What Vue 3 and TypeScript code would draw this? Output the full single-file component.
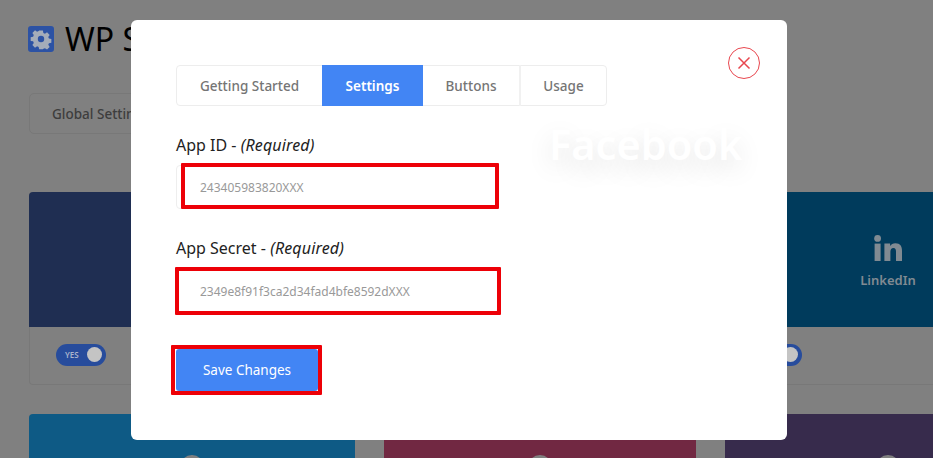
<script setup lang="ts">
interface Provider { name: string; color: string; enabled: boolean; icon: string }
const providers: Provider[] = [
  { name: 'Facebook', color: '#1f2e52', enabled: true, icon: 'none' },
  { name: 'Google', color: '#6e271f', enabled: true, icon: 'none' },
  { name: 'LinkedIn', color: '#003b5c', enabled: true, icon: 'in' },
  { name: 'Twitter', color: '#0e5a85', enabled: false, icon: 'dot' },
  { name: 'Dribbble', color: '#712842', enabled: false, icon: 'dot' },
  { name: 'GitHub', color: '#372b4c', enabled: false, icon: 'dot' },
]
const tabs = ['Getting Started', 'Settings', 'Buttons', 'Usage']
</script>

<template>
  <div class="page">
    <header class="title">
      <svg class="cog" viewBox="0 0 26 26" aria-hidden="true">
        <rect width="26" height="26" rx="3" fill="#2c52a4" />
        <path fill="#a4acb9" d="M11 4h4l.5 2.6 1.7.7 2.2-1.500 2.800 2.800-1.500 2.200.7 1.700 2.600.5v4l-2.600.5-.7 1.700 1.500 2.200-2.800 2.800-2.200-1.500-1.700.7L15 24h-4l-.5-2.600-1.700-.7-2.200 1.500-2.800-2.800 1.500-2.200-.7-1.700L2 15v-4l2.600-.5.7-1.700-1.500-2.200 2.800-2.800 2.200 1.500 1.700-.7z" transform="translate(.8 .8) scale(.94)" />
        <circle cx="13" cy="13" r="3.200" fill="#2c52a4" />
      </svg>
      <h1>WP Social Login</h1>
    </header>
    <nav class="subnav"><span>Global Settings</span></nav>
    <section class="grid">
      <article v-for="p in providers" :key="p.name" class="card">
        <div class="banner" :style="{ backgroundColor: p.color }">
          <template v-if="p.icon === 'in'">
            <svg class="in" viewBox="0 0 28 26" aria-hidden="true">
              <circle cx="3.600" cy="3.400" r="3.400" />
              <rect x=".6" y="8.600" width="6" height="17.400" />
              <path d="M10.400 8.600h5.700V11c.9-1.600 2.900-2.800 5.300-2.800 4.900 0 6.600 3 6.600 7.600V26h-6v-9.200c0-2.200-.6-3.700-2.600-3.700s-3 1.500-3 3.700V26h-6z" />
            </svg>
            <span class="name">{{ p.name }}</span>
          </template>
          <span v-else-if="p.icon === 'dot'" class="ring"></span>
        </div>
        <div v-if="p.enabled" class="foot">
          <span class="switch"><em>YES</em><i></i></span>
        </div>
      </article>
    </section>

    <div class="overlay">
      <div class="modal">
        <button class="close" type="button" aria-label="Close">
          <svg viewBox="0 0 32 32" width="32" height="32" aria-hidden="true">
            <circle cx="16" cy="16" r="15.500" fill="none" stroke="#e8474f" />
            <path d="M10.500 10.500 21.500 21.500M21.500 10.500 10.500 21.500" stroke="#e8474f" stroke-width="1.500" />
          </svg>
        </button>
        <div class="ghost">Facebook</div>
        <div class="tabs">
          <span v-for="t in tabs" :key="t" class="tab" :class="{ active: t === 'Settings' }">{{ t }}</span>
        </div>
        <div class="field first">
          <label>App ID - <em>(Required)</em></label>
          <div class="control">
            <input type="text" value="243405983820XXX" readonly />
            <span class="mark mark-id"></span>
          </div>
        </div>
        <div class="field second">
          <label>App Secret - <em>(Required)</em></label>
          <div class="control">
            <input type="text" value="2349e8f91f3ca2d34fad4bfe8592dXXX" readonly />
            <span class="mark mark-secret"></span>
          </div>
        </div>
        <div class="actions">
          <button class="save" type="button">Save Changes</button>
          <span class="mark mark-save"></span>
        </div>
      </div>
    </div>
  </div>
</template>

<style>
html, body { margin: 0; overflow: hidden; background: #808080; }
</style>

<style scoped>
.page { position: relative; width: 933px; height: 458px; overflow: hidden; padding: 21px 0 0 29px; box-sizing: border-box; font-family: "Noto Sans", "Open Sans", sans-serif; background: #808080; }
.title { display: flex; align-items: center; gap: 11px; height: 36px; }
.cog { width: 26px; height: 26px; margin-left: -1px; }
h1 { margin: 0; font-size: 32px; font-weight: 400; line-height: 36px; color: #000; white-space: nowrap; }
.subnav { width: 400px; height: 39px; margin-top: 36px; border: 1px solid #787878; border-radius: 5px; display: flex; align-items: center; padding-left: 22px; }
.subnav span { font-size: 13.500px; font-weight: 500; color: #3d3d3d; }
.grid { display: grid; grid-template-columns: 326px 312px 326px; gap: 29px; margin-top: 58px; }
.card { height: 193px; border: 1px solid #787878; border-top: 0; border-radius: 4px; box-sizing: border-box; }
.banner { height: 135px; margin: 0 -1px; border-radius: 4px 4px 0 0; display: flex; flex-direction: column; align-items: center; }
.in { width: 28px; height: 26px; margin-top: 43px; fill: #808a92; }
.name { font-size: 13px; font-weight: 600; margin-top: 10px; line-height: 18px; color: #808a92; }
.ring { width: 24px; height: 24px; border-radius: 50%; border: 3px solid #808080; box-sizing: border-box; margin-top: 41px; }
.foot { height: 58px; display: flex; align-items: center; padding-left: 26px; padding-bottom: 3px; box-sizing: border-box; }
.switch { width: 50px; height: 22px; background: #274c9c; border-radius: 11px; display: flex; align-items: center; justify-content: space-between; padding: 0 4px 0 9px; box-sizing: border-box; }
.switch em { font-style: normal; font-size: 8px; font-weight: 600; color: #a9b4cc; }
.switch i { width: 15px; height: 15px; border-radius: 50%; background: #c4c4c4; }

.overlay { position: absolute; inset: 0; padding: 20px 0 0 131px; box-sizing: border-box; }
.modal { position: relative; width: 656px; height: 420px; background: #fff; border-radius: 6px; padding: 45px; box-sizing: border-box; }
.close { position: absolute; top: 27px; right: 27px; width: 32px; height: 32px; padding: 0; border: 0; background: none; }
.ghost { position: absolute; left: 418px; top: 96px; font-size: 41.500px; font-weight: 600; line-height: 56px; color: #fff; text-shadow: 0 9px 26px rgba(0, 0, 0, .13); }
.tabs { display: flex; width: 431px; height: 41px; border: 1px solid #ededed; border-radius: 4px; box-sizing: border-box; }
.tab { display: flex; align-items: center; justify-content: center; font-size: 13.500px; font-weight: 500; color: #757575; height: 41px; margin-top: -1px; border-right: 2px solid #f1f1f1; box-sizing: border-box; }
.tab:nth-child(1) { width: 145px; border-right: 0; }
.tab:nth-child(2) { width: 101px; border-right: 0; }
.tab:nth-child(3) { width: 98px; }
.tab:nth-child(4) { flex: 1; border-right: 0; }
.tab.active { background: #4285f4; color: #fff; font-weight: 600; }
.field label { display: block; font-size: 16px; line-height: 20px; color: #222; font-weight: 400; }
.field em { font-style: italic; letter-spacing: .15px; }
.first { margin-top: 29px; }
.second { margin-top: 29px; }
.control { position: relative; margin-top: 10px; width: 322px; }
.second .control { margin-top: 11px; }
input { display: block; width: 100%; height: 44px; padding: 0 23px; border: 1px solid #eee; border-radius: 4px; box-sizing: border-box; font: 12px "Noto Sans", sans-serif; color: #999; background: #fff; outline: none; }
.mark { position: absolute; border: 4px solid #ed0007; border-radius: 1px; box-sizing: border-box; pointer-events: none; }
.mark-id { left: 5px; top: -2px; width: 318px; height: 46px; }
.mark-secret { left: -1px; top: -2px; width: 326px; height: 48px; }
.actions { position: relative; margin-top: 36px; width: 142px; }
.save { display: block; width: 142px; height: 42px; border: 0; border-radius: 3px; background: #4285f4; color: #fff; font: 400 13.500px "Noto Sans", sans-serif; padding: 0; }
.mark-save { left: -5px; top: -4px; width: 151px; height: 50px; }
</style>
